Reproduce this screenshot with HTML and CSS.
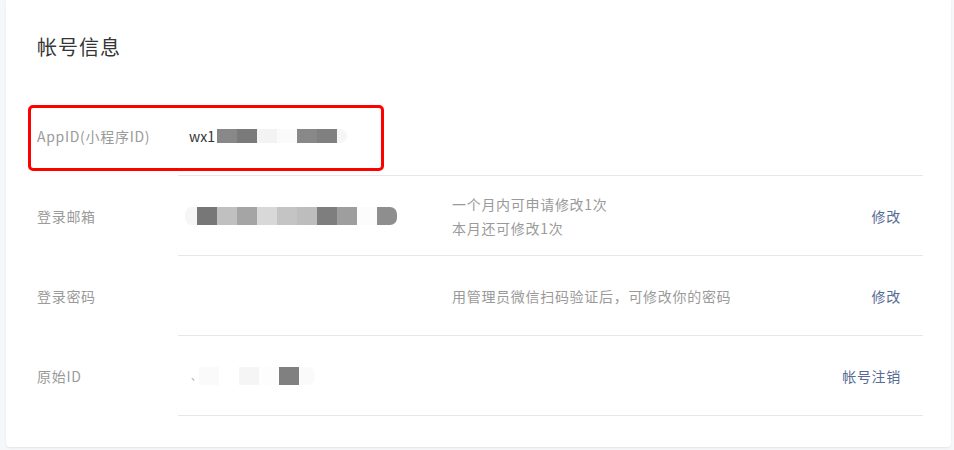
FILE: index.html
```html
<!DOCTYPE html>
<html lang="zh-CN">

<head>
  <meta charset="UTF-8">
  <meta name="viewport" content="width=device-width, initial-scale=1.0">
  <title>帐号信息</title>
  <link rel="stylesheet" href="styles.css">
</head>

<body>
  <div class="page">
    <section class="card">
      <h2 class="card-title">帐号信息</h2>
      <div class="mark"></div>
      <ul class="info-list">
        <li class="info-row">
          <span class="info-label">AppID(小程序ID)</span>
          <div class="info-body no-line">
            <div class="info-value">wx1<span class="mosaic">
                <i style="background:#888"></i><i style="background:#7a7a7a"></i><i style="background:#f3f3f3"></i><i style="background:#fafafa"></i><i style="background:#888"></i><i style="background:#808080"></i><i class="end" style="background:#f6f6f6;width:10px"></i>
              </span></div>
          </div>
        </li>
        <li class="info-row">
          <span class="info-label">登录邮箱</span>
          <div class="info-body">
            <div class="info-value">
              <span class="mosaic tall shift">
                <i class="start" style="background:#f6f6f6;width:12px"></i><i style="background:#777"></i><i style="background:#c0c0c0"></i><i style="background:#a5a5a5"></i><i style="background:#d8d8d8"></i><i style="background:#c4c4c4"></i><i style="background:#bdbdbd"></i><i style="background:#7e7e7e"></i><i style="background:#9e9e9e"></i><i style="background:#fcfcfc"></i><i class="end" style="background:#8e8e8e"></i>
              </span>
            </div>
            <div class="info-desc">
              <p>一个月内可申请修改1次</p>
              <p>本月还可修改1次</p>
            </div>
            <a class="info-action" href="#">修改</a>
          </div>
        </li>
        <li class="info-row">
          <span class="info-label">登录密码</span>
          <div class="info-body">
            <div class="info-value"></div>
            <div class="info-desc">
              <p>用管理员微信扫码验证后，可修改你的密码</p>
            </div>
            <a class="info-action" href="#">修改</a>
          </div>
        </li>
        <li class="info-row">
          <span class="info-label">原始ID</span>
          <div class="info-body">
            <div class="info-value">
              <span class="mosaic tall">
                <i class="tick" style="width:8px;background:transparent">、</i><i style="background:#fafafa"></i><i style="background:#fff"></i><i style="background:#f5f5f5"></i><i style="background:#fdfdfd"></i><i style="background:#808080"></i><i class="end" style="background:#fafafa;width:16px"></i>
              </span>
            </div>
            <div class="info-desc"></div>
            <a class="info-action" href="#">帐号注销</a>
          </div>
        </li>
      </ul>
    </section>
  </div>
</body>

</html>
```

FILE: styles.css
```css
body {
  margin: 0;
  padding: 0;
  background-color: #f6f7f9;
  font-family: "Noto Sans CJK SC", "Liberation Sans", sans-serif;
  font-size: 14px;
  letter-spacing: 0.7px;
  color: #353535;
}

.page {
  padding: 0 3px 3px 6px;
}

.card {
  position: relative;
  background-color: #fff;
  border-radius: 0 0 4px 4px;
  box-shadow: 0 1px 2px rgba(0, 0, 0, 0.08);
  padding: 33px 28px 31px 31px;
}

.card-title {
  margin: 0 0 35px 0;
  font-size: 20px;
  font-weight: normal;
  line-height: 28px;
  letter-spacing: 1px;
  color: #353535;
}

.mark {
  position: absolute;
  left: 22px;
  top: 105px;
  width: 350px;
  height: 60px;
  border: 3px solid #f00;
  border-radius: 5px;
}

.info-list {
  list-style-type: none;
  margin: 0;
  padding: 0;
}

.info-row {
  display: flex;
  height: 80px;
}

.info-label {
  width: 141px;
  flex-shrink: 0;
  display: flex;
  align-items: center;
  color: #9a9a9a;
  padding-bottom: 1px;
}

.info-body {
  flex: 1;
  display: flex;
  align-items: center;
  border-bottom: 1px solid #e7e7e7;
  padding: 0 22px 0 11px;
}

.info-value {
  width: 263px;
  display: flex;
  align-items: center;
  color: #353535;
  letter-spacing: 0;
}

.info-desc {
  flex: 1;
  color: #9a9a9a;
  line-height: 24px;
}

.info-desc p {
  margin: 0;
}

.info-action {
  color: #576b95;
  text-decoration: none;
}

.mosaic {
  display: inline-flex;
  height: 14px;
  margin-left: 2px;
}

.mosaic.tall {
  height: 18px;
}

.mosaic.shift {
  margin-left: -4px;
}

.mosaic i {
  display: block;
  width: 20px;
  height: 100%;
  font-style: normal;
}

.mosaic .start {
  border-radius: 7px 0 0 7px;
}

.mosaic .end {
  border-radius: 0 7px 7px 0;
}

.mosaic .tick {
  font-size: 10px;
  line-height: 18px;
  color: #999;
}
```
